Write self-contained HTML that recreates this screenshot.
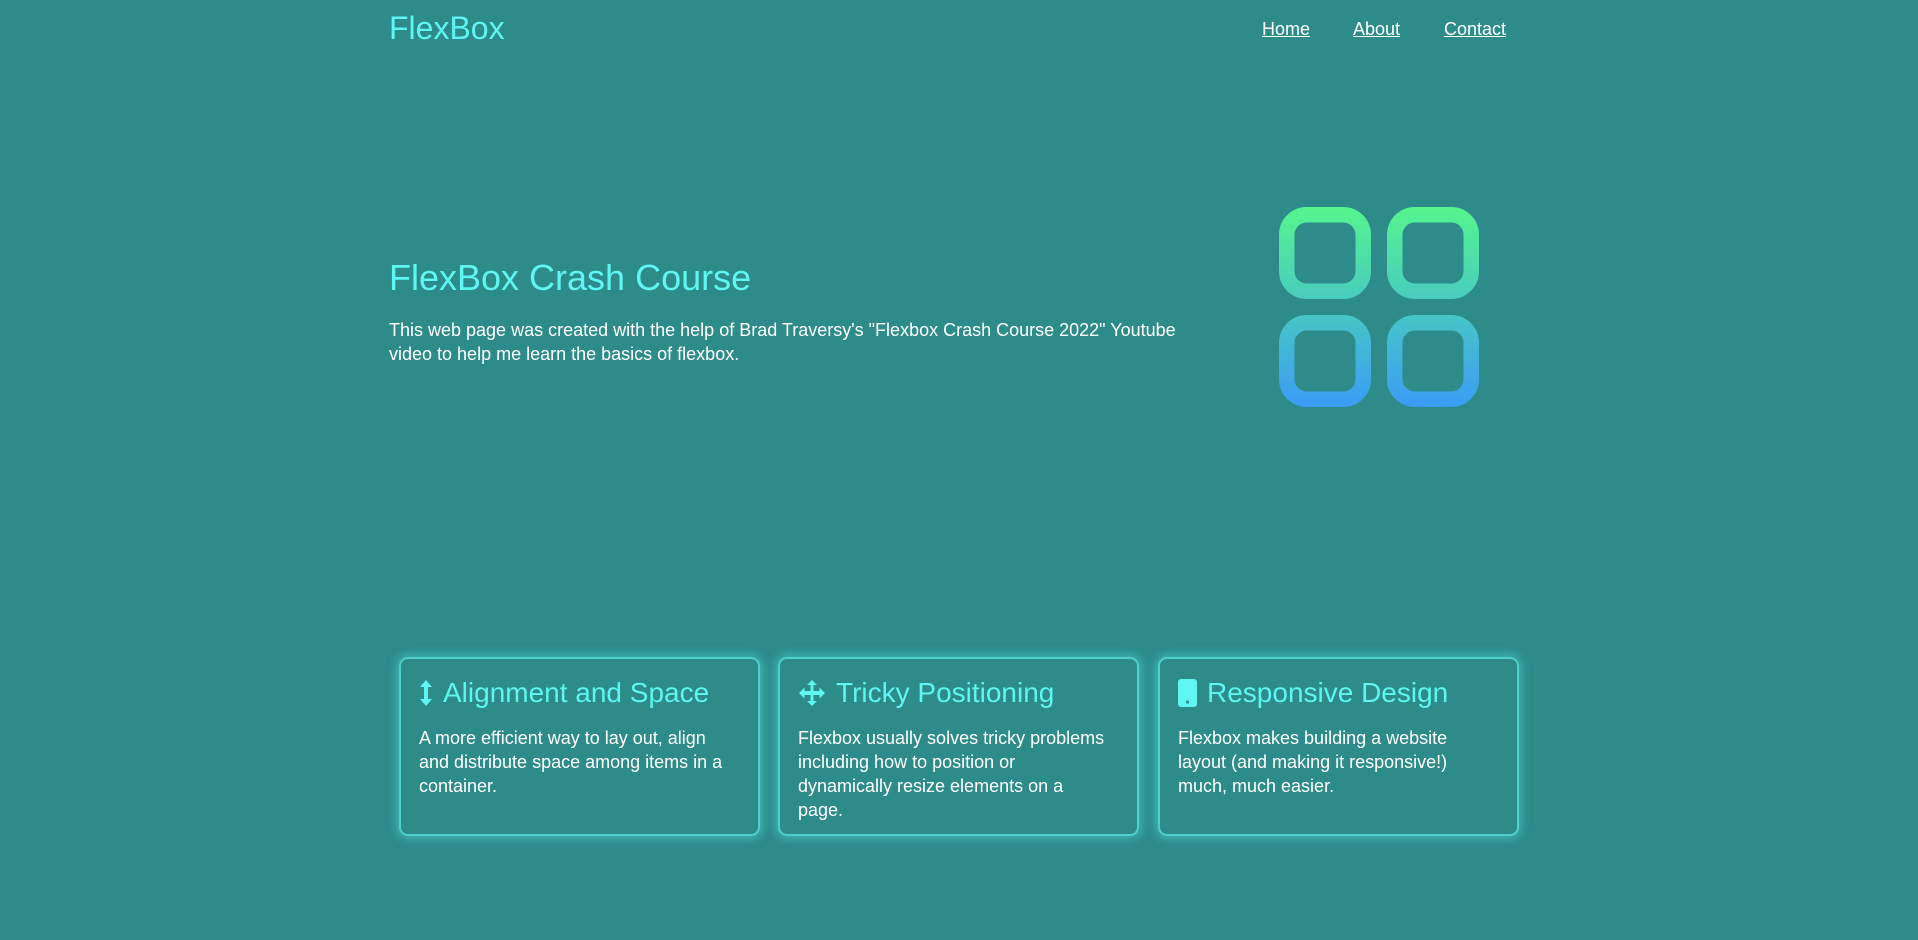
<!DOCTYPE html>
<html><head><meta charset="utf-8"><style>
*{margin:0;padding:0;box-sizing:border-box}
body{width:1918px;height:940px;background:#2d8b8a;font-family:"Liberation Sans",sans-serif;color:#fff;position:relative;overflow:hidden}
.logo{position:absolute;left:389px;top:10px;font-size:32px;color:#5ff5f0}
.nav a{position:absolute;top:19px;font-size:18px;color:#fff;text-decoration:underline}
h1{position:absolute;left:389px;top:257px;font-size:36px;font-weight:normal;color:#5ff5f0}
.p{position:absolute;left:389px;top:318px;width:850px;font-size:18px;line-height:24px}
.icon{position:absolute;left:1279px;top:207px}
.card{position:absolute;top:657px;width:361px;height:179px;border:2px solid #4fcfcb;border-radius:9px;box-shadow:0 0 10px 2px rgba(90,235,230,.5);padding:16px 18px}
.card h2{font-size:28px;font-weight:normal;color:#5ff5f0;display:flex;align-items:center;height:36px;margin-bottom:15px}
.card h2 svg{margin-right:10px}
.card p{font-size:18px;line-height:24px}
</style></head><body>
<div class="logo">FlexBox</div>
<div class="nav"><a style="left:1262px">Home</a><a style="left:1353px">About</a><a style="left:1444px">Contact</a></div>
<h1>FlexBox Crash Course</h1>
<div class="p">This web page was created with the help of Brad Traversy's "Flexbox Crash Course 2022" Youtube<br>video to help me learn the basics of flexbox.</div>
<svg class="icon" width="200" height="201" viewBox="0 0 200 201"><defs><linearGradient id="g" gradientUnits="userSpaceOnUse" x1="0" y1="0" x2="0" y2="200"><stop offset="0" stop-color="#55f58e"/><stop offset="1" stop-color="#3b9cf6"/></linearGradient></defs>
<g fill="none" stroke="url(#g)" stroke-width="15.5"><rect x="7.75" y="7.75" width="76.5" height="76.5" rx="20"/><rect x="115.75" y="7.75" width="76.5" height="76.5" rx="20"/><rect x="7.75" y="115.75" width="76.5" height="76.5" rx="20"/><rect x="115.75" y="115.75" width="76.5" height="76.5" rx="20"/></g></svg>
<div class="card" style="left:399px"><h2><svg width="14" height="30" viewBox="0 0 14 30"><path d="M7 2L1 9h4v12H1l6 7 6-7H9V9h4z" fill="#5ff5f0"/></svg>Alignment and Space</h2><p>A more efficient way to lay out, align<br>and distribute space among items in a<br>container.</p></div>
<div class="card" style="left:778px"><h2><svg width="28" height="28" viewBox="0 0 28 28"><path d="M14 1l-5 5h3.5v6h-6V8.5L1 14l5.5 5.5V16h6v6H9l5 5 5-5h-3.5v-6h6v3.5L27 14l-5.5-5.5V12h-6V6H19z" fill="#5ff5f0"/></svg>Tricky Positioning</h2><p>Flexbox usually solves tricky problems<br>including how to position or<br>dynamically resize elements on a<br>page.</p></div>
<div class="card" style="left:1158px"><h2><svg width="19" height="28" viewBox="0 0 19 28"><rect x="0" y="0" width="19" height="28" rx="3" fill="#5ff5f0"/><circle cx="9.5" cy="23" r="1.6" fill="#2d8b8a"/></svg>Responsive Design</h2><p>Flexbox makes building a website<br>layout (and making it responsive!)<br>much, much easier.</p></div>
</body></html>
